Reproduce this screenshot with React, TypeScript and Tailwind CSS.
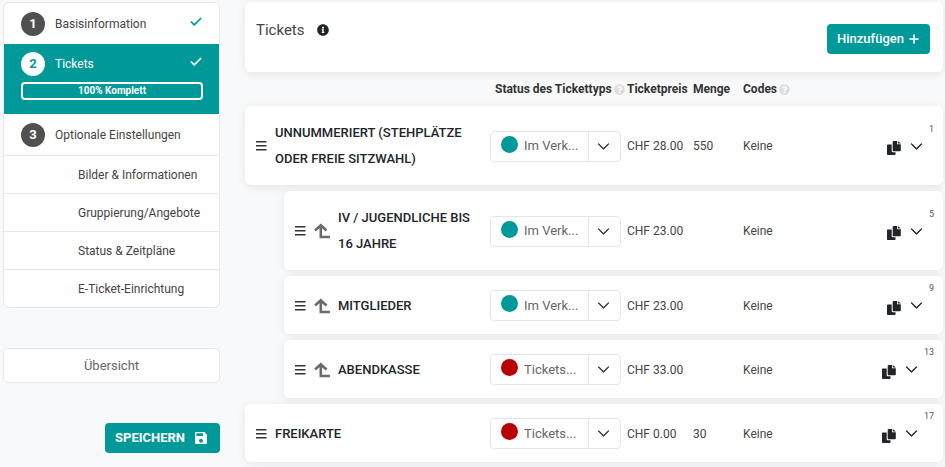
import React from 'react';
import { Check } from 'lucide-react';
import { BsChevronDown, BsPlusLg } from 'react-icons/bs';
import { FaInfoCircle, FaQuestionCircle } from 'react-icons/fa';
import { MdSave } from 'react-icons/md';

interface Ticket {
  name: string;
  status: 'sale' | 'closed';
  price: string;
  amount?: string;
  codes: string;
  position: number;
  nested?: boolean;
}

const tickets: Ticket[] = [
  { name: 'UNNUMMERIERT (STEHPLÄTZE ODER FREIE SITZWAHL)', status: 'sale', price: 'CHF 28.00', amount: '550', codes: 'Keine', position: 1 },
  { name: 'IV / JUGENDLICHE BIS 16 JAHRE', status: 'sale', price: 'CHF 23.00', codes: 'Keine', position: 5, nested: true },
  { name: 'MITGLIEDER', status: 'sale', price: 'CHF 23.00', codes: 'Keine', position: 9, nested: true },
  { name: 'ABENDKASSE', status: 'closed', price: 'CHF 33.00', codes: 'Keine', position: 13, nested: true },
  { name: 'FREIKARTE', status: 'closed', price: 'CHF 0.00', amount: '30', codes: 'Keine', position: 17 },
];

const subSteps = ['Bilder & Informationen', 'Gruppierung/Angebote', 'Status & Zeitpläne', 'E-Ticket-Einrichtung'];

const cardClass = 'rounded-md bg-white shadow-[0_2px_10px_rgba(0,0,0,0.08)]';
const columnsClass = 'grid w-[453px] shrink-0 grid-cols-[137px_66px_50px_1fr] items-center';

const StepNumber: React.FC<{ value: number; active?: boolean }> = ({ value, active }) => (
  <span
    className={`flex size-6 shrink-0 items-center justify-center rounded-full text-[13px] font-bold ${
      active ? 'bg-white text-[#009999]' : 'bg-[#505050] text-white'
    }`}
  >
    {value}
  </span>
);

const DragHandle: React.FC = () => (
  <svg viewBox="0 0 11 10" className="h-2.5 w-[11px] shrink-0" fill="#333" aria-hidden="true">
    <path d="M0 0h10.500v1.500H0zM0 4h10.500v1.500H0zM0 8h10.500v1.500H0z" />
  </svg>
);

// Arrow pointing up to the parent ticket
const ParentArrow: React.FC = () => (
  <svg viewBox="0 0 16 16" className="size-4 shrink-0" fill="none" stroke="#6b6b6b" strokeWidth="2.6" aria-hidden="true">
    <path d="M1 7.5 6.8 2.2 12.5 7.5M6.8 2.8V14H16" />
  </svg>
);

const CopyIcon: React.FC = () => (
  <svg viewBox="0 0 14 14" className="size-[14px]" fill="currentColor" aria-hidden="true">
    <path d="M6.5 0H10v3.2h3.8v6.3a.8.8 0 0 1-.8.8H6.5a.8.8 0 0 1-.8-.8V.8a.8.8 0 0 1 .8-.8z" />
    <path d="M10.8 0 13.8 2.5h-3z" />
    <path d="M4.7 3.5H.8a.8.8 0 0 0-.8.8v8.9a.8.8 0 0 0 .8.8h6.9a.8.8 0 0 0 .8-.8v-1.9H5.7a1 1 0 0 1-1-1z" />
  </svg>
);

const StatusSelect: React.FC<{ ticket: Ticket }> = ({ ticket }) => (
  <div className="relative w-[131px]">
    <select
      aria-label={`Status ${ticket.name}`}
      defaultValue={ticket.status}
      className="block h-[31px] w-full appearance-none rounded border border-[#e3e6e8] bg-white pr-8 pl-[33px] text-[13px] text-[#666]"
    >
      <option value="sale">Im Verk...</option>
      <option value="closed">Tickets...</option>
    </select>
    <span
      className={`pointer-events-none absolute top-[5px] left-[11px] size-[17px] rounded-full ${
        ticket.status === 'sale' ? 'bg-[#009999]' : 'bg-[#b80000]'
      }`}
    />
    <span className="pointer-events-none absolute inset-y-0 right-0 flex w-[33px] items-center justify-center border-l border-[#e3e6e8] pr-[3px]">
      <BsChevronDown className="size-[13px] text-[#333]" strokeWidth={0.9} />
    </span>
  </div>
);

const TicketRow: React.FC<{ ticket: Ticket }> = ({ ticket }) => (
  <li className={`flex items-center pt-[14px] pb-[13px] ${cardClass} ${ticket.nested ? 'ml-[39px]' : ''}`}>
    <div className="flex min-w-0 flex-1 items-center gap-2 pr-2 pl-[11px]">
      <DragHandle />
      {ticket.nested && <ParentArrow />}
      <span className="text-[13px] leading-[26px] font-medium text-[#212529]">{ticket.name}</span>
    </div>
    <div className={`${columnsClass} text-xs text-[#444]`}>
      <StatusSelect ticket={ticket} />
      <span>{ticket.price}</span>
      <span>{ticket.amount}</span>
      <div className="-my-4 flex items-center justify-between pr-[9px]">
        <span>{ticket.codes}</span>
        <div className="flex items-center text-[#212529]">
          <button type="button" aria-label="Kopieren" className="mt-1 mr-[9px]">
            <CopyIcon />
          </button>
          <button type="button" aria-label="Öffnen" className="mr-1.5">
            <BsChevronDown className="size-[13px]" strokeWidth={1} />
          </button>
          <span className="mb-[34px] text-[9px] leading-none text-[#555]">{ticket.position}</span>
        </div>
      </div>
    </div>
  </li>
);

const Sidebar: React.FC = () => (
  <aside className="flex w-[217px] shrink-0 flex-col">
    <nav className="overflow-hidden rounded-md border border-[#e6e8ea] bg-white">
      <a href="#basis" className="flex h-[41px] items-center gap-2.5 pr-4 pl-[17px]">
        <StepNumber value={1} />
        <span className="flex-1">Basisinformation</span>
        <Check className="mb-1 size-[14px] text-[#009999]" strokeWidth={3} />
      </a>
      <a href="#tickets" aria-current="step" className="-mx-px block bg-[#009999] pt-2 pr-[17px] pb-[14px] pl-[18px] text-white">
        <span className="flex items-center gap-2.5">
          <StepNumber value={2} active />
          <span className="flex-1">Tickets</span>
          <Check className="mb-1 size-[14px]" strokeWidth={3} />
        </span>
        <span className="mt-1.5 block rounded border-2 border-white text-center text-[10px] leading-[14px] font-bold">
          100% Komplett
        </span>
      </a>
      <a href="#optional" className="flex h-[41px] items-center gap-2.5 pl-[17px]">
        <StepNumber value={3} />
        <span>Optionale Einstellungen</span>
      </a>
      {subSteps.map((step) => (
        <a key={step} href="#optional" className="flex h-[38px] items-center border-t border-[#e6e8ea] pl-[74px]">
          {step}
        </a>
      ))}
    </nav>
    <button type="button" className="mt-10 h-[35px] rounded-[5px] border border-[#e6e8ea] bg-white text-[13px] text-[#666]">
      Übersicht
    </button>
    <button
      type="button"
      className="mt-10 flex h-[30px] items-center gap-2 self-end rounded bg-[#009999] pr-[11px] pl-2.5 text-[13px] font-bold text-white"
    >
      SPEICHERN
      <MdSave className="size-4" />
    </button>
  </aside>
);

const App: React.FC = () => {
  return (
    <div className="flex min-h-screen items-start gap-[25px] bg-[#f8f9fb] pt-0.5 pr-0.5 pl-[3px] font-['Roboto','Liberation_Sans',sans-serif] text-xs text-[#444]">
      <Sidebar />
      <main className="min-w-0 flex-1">
        <header className={`flex h-[70px] items-start justify-between pr-[13px] pl-[11px] ${cardClass}`}>
          <h1 className="mt-4 flex items-center gap-3 text-[15px] leading-6">
            Tickets
            <FaInfoCircle className="size-3 text-[#212529]" />
          </h1>
          <button
            type="button"
            className="mt-[22px] flex h-[30px] items-center gap-1 rounded bg-[#009999] px-2.5 text-[13px] font-medium text-white"
          >
            Hinzufügen
            <BsPlusLg className="size-3" strokeWidth={1} />
          </button>
        </header>
        <div className="flex h-[34px] items-center justify-end font-bold text-[#333]">
          <div className={columnsClass}>
            <span className="flex items-center gap-0.5 pl-[5px] whitespace-nowrap">
              Status des Tickettyps
              <FaQuestionCircle className="size-[11px] shrink-0 text-[#ddd]" />
            </span>
            <span>Ticketpreis</span>
            <span>Menge</span>
            <span className="flex items-center gap-0.5">
              Codes
              <FaQuestionCircle className="size-[11px] text-[#ddd]" />
            </span>
          </div>
        </div>
        <ul className="flex flex-col gap-1.5">
          {tickets.map((ticket) => (
            <TicketRow key={ticket.position} ticket={ticket} />
          ))}
        </ul>
      </main>
    </div>
  );
};

export default App;
